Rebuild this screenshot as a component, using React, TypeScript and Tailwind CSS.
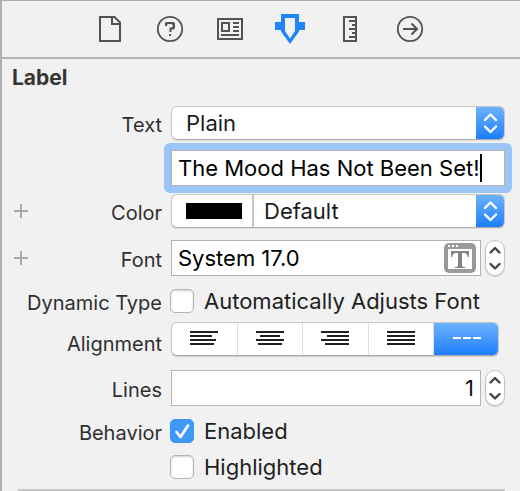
import { useState } from "react";
import type { ReactNode } from "react";

function Row({ label, htmlFor, plus, low, className = "", children }: {
  label?: string; htmlFor?: string; plus?: boolean; low?: boolean; className?: string; children: ReactNode;
}) {
  return (
    <div className={`flex ${low ? "items-end" : "items-center"} ${className}`}>
      <div className={`flex w-40 shrink-0 items-center pl-3 ${low ? "pb-0.5" : ""}`}>
        {plus && (
          <button type="button" aria-label={`Add ${label} variation`} className="-ml-px h-4 w-4">
            <svg viewBox="0 0 16 16" className="h-4 w-4" stroke="#a9a9a9" strokeWidth="2" shapeRendering="crispEdges">
              <path d="M1 8H15M8 1V15" />
            </svg>
          </button>
        )}
        {label && (
          <label htmlFor={htmlFor} className="ml-auto whitespace-nowrap pt-1 text-[20px] leading-5 text-[#2f2f2f]">{label}</label>
        )}
      </div>
      <div className="ml-[9px] flex min-w-0 flex-1 items-center">{children}</div>
    </div>
  );
}

function Popup({ id, options, label, swatch }: { id: string; options: string[]; label: string; swatch?: boolean }) {
  return (
    <div className="relative flex h-[34px] min-w-0 flex-1 overflow-hidden rounded-md border border-[#c6c6c6] border-b-[#acacac] bg-white shadow-[0_1px_1px_rgba(0,0,0,0.08)]">
      {swatch && (
        <span className="flex w-[82px] shrink-0 items-center border-r-2 border-[#c4c4c4] pl-3.5">
          <span className="h-4 w-14 bg-black" />
        </span>
      )}
      <select id={id} aria-label={label} className={`h-full min-w-0 flex-1 appearance-none bg-transparent pr-8 text-[22px] leading-8 text-[#1c1c1c] outline-none ${swatch ? "pl-2.5" : "pl-3.5"}`}>
        {options.map((o) => <option key={o}>{o}</option>)}
      </select>
      <span className="pointer-events-none absolute -top-px -right-px flex h-[34px] w-[29px] items-center justify-center bg-linear-to-b from-[#6db3fa] to-[#157cfc]">
        <svg viewBox="0 0 29 34" className="h-[34px] w-[29px]" fill="none" stroke="white" strokeWidth="2.4" strokeLinecap="round" strokeLinejoin="round">
          <path d="M9 14 14.5 8.500 20 14M9 20.500 14.500 26 20 20.500" />
        </svg>
      </span>
    </div>
  );
}

function Stepper({ label, onStep }: { label: string; onStep?: (d: number) => void }) {
  return (
    <div className="ml-1 flex h-9 w-5 shrink-0 flex-col overflow-hidden rounded-[10px] border border-[#c2c2c2] bg-white shadow-[0_1px_1px_rgba(0,0,0,0.15)]">
      <button type="button" aria-label={`Increase ${label}`} onClick={() => onStep?.(1)} className="flex flex-1 items-center justify-center">
        <svg viewBox="0 0 18 17" className="h-[17px] w-[18px]" fill="none" stroke="#444" strokeWidth="2.4" strokeLinecap="round" strokeLinejoin="round"><path d="M4.500 11.500 9 7 13.500 11.500" /></svg>
      </button>
      <button type="button" aria-label={`Decrease ${label}`} onClick={() => onStep?.(-1)} className="flex flex-1 items-center justify-center">
        <svg viewBox="0 0 18 17" className="h-[17px] w-[18px]" fill="none" stroke="#444" strokeWidth="2.4" strokeLinecap="round" strokeLinejoin="round"><path d="M4.500 6 9 10.500 13.500 6" /></svg>
      </button>
    </div>
  );
}

function Check({ id, label, defaultChecked }: { id: string; label: string; defaultChecked?: boolean }) {
  return (
    <div className="-ml-px flex h-6 items-center">
      <span className="relative h-6 w-6 shrink-0">
        <input id={id} type="checkbox" defaultChecked={defaultChecked} className="peer block h-6 w-6 appearance-none rounded-[5px] border border-[#b4b4b4] bg-white shadow-[inset_0_1px_2px_rgba(0,0,0,0.18)] checked:border-[#3b93f7] checked:bg-[#3f99f9] checked:shadow-none" />
        <svg viewBox="0 0 24 24" className="pointer-events-none absolute inset-0 hidden h-6 w-6 peer-checked:block" fill="none" stroke="white" strokeWidth="2.6" strokeLinecap="round" strokeLinejoin="round">
          <path d="M6.500 13 10.500 18 18 6.500" />
        </svg>
      </span>
      <label htmlFor={id} className="ml-2.5 whitespace-nowrap text-[22px] leading-6 text-[#1f1f1f]">{label}</label>
    </div>
  );
}

const tabs: { name: string; icon: ReactNode }[] = [
  { name: "File", icon: <path d="M5 3H19.500L25 8.500V27H5ZM17 4V10H24" /> },
  { name: "Quick Help", icon: <><circle cx="15" cy="15" r="12.2" strokeWidth="1.8" /><path d="M11 12V9.500H12V9H18V10H19V13.500H18V14.500H15.500V18M15 20V22" /></> },
  { name: "Identity", icon: <path d="M3 5H27V25H3ZM7 9H14V17H7ZM18 9H24M18 13H24M18 17H24M6 21H24" /> },
  { name: "Attributes", icon: <path fill="#2084fb" fillRule="evenodd" stroke="none" d="M6 0H24V8H30V16H24V17.500L15 30 6 17.500V16H0V8H6ZM10 4V17L15 24.500 20 17V4Z" /> },
  { name: "Size", icon: <path d="M9 3H21V27H9ZM14 7H21M17 11H21M14 15H21M17 19H21M14 23H21" /> },
  { name: "Connections", icon: <><circle cx="15" cy="15" r="12.2" strokeWidth="1.8" /><path d="M8 15H22M16.500 9.500 22 15 16.500 20.500" /></> },
];

const alignments: { name: string; d: string }[] = [
  { name: "Left", d: "M0 2H28M0 6H22M0 10H26M0 14H24" },
  { name: "Center", d: "M0 2H28M4 6H24M0 10H28M2 14H26" },
  { name: "Right", d: "M0 2H28M6 6H28M0 10H28M4 14H28" },
  { name: "Justified", d: "M0 2H28M0 6H28M0 10H28M0 14H28" },
  { name: "Natural", d: "M0 8H8M10 8H18M20 8H28" },
];

export default function App() {
  const [align, setAlign] = useState("Natural");
  const [lines, setLines] = useState(1);
  return (
    <main className="min-h-screen border-t border-l-2 border-t-[#acacac] border-l-[#b0b0b0] bg-[#f1f1f1] font-['Inter',sans-serif]">
      <nav aria-label="Inspectors" className="flex h-[58px] items-center justify-center border-b-2 border-[#b4b4b4] pr-0.5">
        {tabs.map((t) => (
          <button key={t.name} type="button" aria-label={t.name} className="flex h-14 w-[60px] items-center justify-center">
            <svg viewBox="0 0 30 30" className="h-[30px] w-[30px]" fill="none" stroke="#535353" strokeWidth="2">{t.icon}</svg>
          </button>
        ))}
      </nav>
      <form className="pr-[15px]" onSubmit={(e) => e.preventDefault()}>
        <h2 className="pt-[7px] pl-2.5 text-[21px] leading-6 font-bold text-[#353535]">Label</h2>
        <Row label="Text" htmlFor="text-kind" className="mt-4">
          <Popup id="text-kind" label="Text" options={["Plain", "Attributed"]} />
        </Row>
        <Row className="mt-[3px]">
          <div className="relative -mx-[7px] flex min-w-0 flex-1 rounded-md bg-[#9ac5f4] p-[7px]">
            <input aria-label="Text content" defaultValue="The Mood Has Not Been Set!" className="h-9 min-w-0 flex-1 border border-[#b3b3b3] bg-white px-1.5 text-[22px] text-black outline-none" />
            <span className="absolute top-[11px] left-[316px] h-7 w-0.5 bg-black" />
          </div>
        </Row>
        <Row label="Color" htmlFor="color" plus className="mt-px">
          <Popup id="color" label="Color" swatch options={["Default", "White", "Black"]} />
        </Row>
        <Row label="Font" htmlFor="font" plus className="mt-3">
          <div className="flex h-9 min-w-0 flex-1 items-center border border-[#b3b3b3] bg-white pr-1">
            <input id="font" defaultValue="System 17.0" className="h-full min-w-0 flex-1 bg-transparent px-1.5 text-[22px] text-black outline-none" />
            <button type="button" aria-label="Choose font" className="h-[30px] w-8">
              <svg viewBox="0 0 32 30" className="h-[30px] w-8">
                <rect width="32" height="30" rx="5" fill="#999" />
                <path d="M4 2H6V4H4ZM8 2H10V4H8ZM12 2H14V4H12ZM4 6H28V26H4Z" fill="white" />
                <path d="M7 8H25V14H24Q23 10 20 10H18V22Q18 24 21 24V25H11V24Q14 24 14 22V10H12Q9 10 8 14H7Z" fill="#858585" />
              </svg>
            </button>
          </div>
          <Stepper label="font size" />
        </Row>
        <Row label="Dynamic Type" htmlFor="dynamic" className="mt-[13px]">
          <Check id="dynamic" label="Automatically Adjusts Font" />
        </Row>
        <Row label="Alignment" low className="mt-[9px]">
          <div role="group" aria-label="Alignment" className="mr-1.5 flex h-[34px] flex-1 overflow-hidden rounded-md border border-[#c6c6c6] border-b-[#acacac] bg-white shadow-[0_1px_1px_rgba(0,0,0,0.15)]">
            {alignments.map((a) => (
              <button key={a.name} type="button" aria-label={a.name} aria-pressed={align === a.name} onClick={() => setAlign(a.name)}
                className={`-my-px flex flex-1 items-center justify-center border-r border-[#dedede] last:-mr-px last:border-r-0 ${align === a.name ? "bg-linear-to-b from-[#6db3fa] to-[#157cfc] text-white" : "text-[#202020]"}`}>
                <svg viewBox="0 0 28 16" className="mb-0.5 h-4 w-7" stroke="currentColor" strokeWidth="2" shapeRendering="crispEdges"><path d={a.d} /></svg>
              </button>
            ))}
          </div>
        </Row>
        <Row label="Lines" htmlFor="lines" className="mt-3.5">
          <input id="lines" inputMode="numeric" value={lines} onChange={(e) => setLines(Number(e.target.value) || 0)} className="h-9 min-w-0 flex-1 border border-[#b3b3b3] bg-white px-1.5 text-right text-[22px] text-[#111] outline-none" />
          <Stepper label="lines" onStep={(d) => setLines((n) => Math.max(0, n + d))} />
        </Row>
        <Row label="Behavior" htmlFor="enabled" className="mt-[13px]">
          <Check id="enabled" label="Enabled" defaultChecked />
        </Row>
        <Row className="mt-3">
          <Check id="highlighted" label="Highlighted" />
        </Row>
        <hr className="mt-2.5 ml-4 border-t-2 border-[#c6c6c6]" />
      </form>
    </main>
  );
}
